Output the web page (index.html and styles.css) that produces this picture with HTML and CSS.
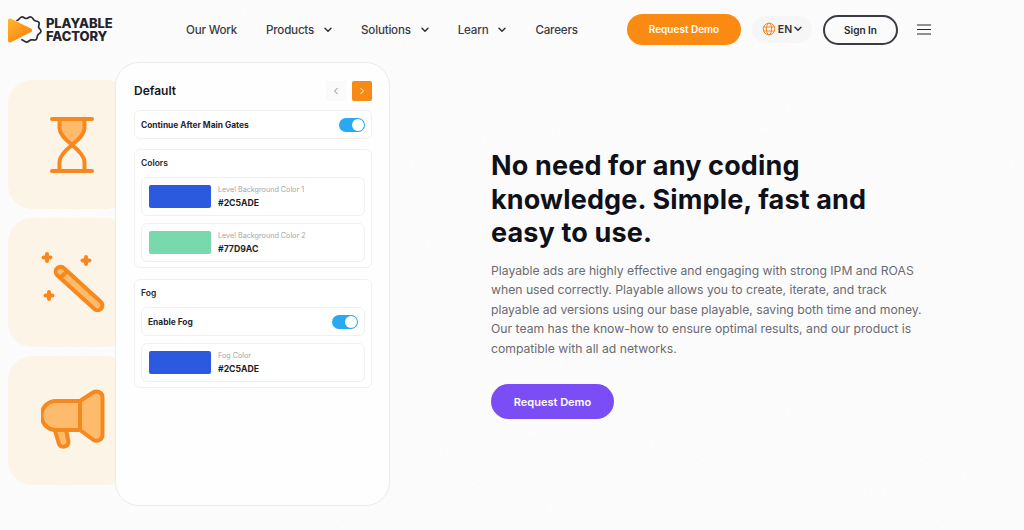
FILE: index.html
```html
<!DOCTYPE html>
<html lang="en">
<head>
<meta charset="utf-8">
<title>Playable Factory</title>
<link rel="stylesheet" href="styles.css">
</head>
<body>
<header class="header">
  <a class="logo">
    <svg class="logo-mark" width="36" height="30" viewBox="0 0 36 30">
      <defs><linearGradient id="lg" x1="0" y1="0" x2="1" y2="1"><stop offset="0" stop-color="#ffb62a"/><stop offset="1" stop-color="#fb7a0c"/></linearGradient></defs>
      <path d="M9 5.500c2-.3 2.500-3 4.500-3.500s3 1.500 4.700 1.500S21 1.500 23 2s2 2.800 3.500 3.500 3.500.3 4.500 2-.8 3-.4 4.700 2.700 2.300 2.400 4.200-2.600 2.300-3.400 3.900-.1 3.400-1.700 4.400-3.200-.3-5 .2-2.500 2.300-4.500 2.200-2.500-1.800-4.500-2.400" fill="none" stroke="#2b2b33" stroke-width="1.700" stroke-linecap="round"/>
      <path d="M0 5.500C0 3.700 1.600 3 3 3.700L23 13.500c1.700.8 1.700 2.700 0 3.500L3 27.300C1.600 28 0 27.300 0 25.500z" fill="url(#lg)"/>
    </svg>
    <span class="logo-text">PLAYABLE<br>FACTORY</span>
  </a>
  <nav class="nav">
    <a class="nav-link">Our Work</a>
    <a class="nav-link">Products<svg class="chev" width="8" height="6" viewBox="0 0 8 6"><path d="M1 1.200l3 3 3-3" fill="none" stroke="#30303a" stroke-width="1.500" stroke-linecap="round" stroke-linejoin="round"/></svg></a>
    <a class="nav-link">Solutions<svg class="chev" width="8" height="6" viewBox="0 0 8 6"><path d="M1 1.200l3 3 3-3" fill="none" stroke="#30303a" stroke-width="1.500" stroke-linecap="round" stroke-linejoin="round"/></svg></a>
    <a class="nav-link">Learn<svg class="chev" width="8" height="6" viewBox="0 0 8 6"><path d="M1 1.200l3 3 3-3" fill="none" stroke="#30303a" stroke-width="1.500" stroke-linecap="round" stroke-linejoin="round"/></svg></a>
    <a class="nav-link">Careers</a>
  </nav>
  <a class="btn-orange">Request Demo</a>
  <a class="lang">
    <svg width="14" height="14" viewBox="0 0 14 14" fill="none" stroke="#f5861f" stroke-width="1"><circle cx="7" cy="7" r="5.800"/><ellipse cx="7" cy="7" rx="2.600" ry="5.800"/><path d="M1.500 5h11M1.500 9h11"/></svg>
    <span>EN</span>
    <svg width="8" height="6" viewBox="0 0 8 6"><path d="M1 1.200l3 3 3-3" fill="none" stroke="#30303a" stroke-width="1.500" stroke-linecap="round" stroke-linejoin="round"/></svg>
  </a>
  <a class="btn-outline">Sign In</a>
  <svg class="burger" width="14" height="11" viewBox="0 0 14 11"><path d="M0 1h14M0 5.500h14M0 10h14" stroke="#26262e" stroke-width="1.200"/></svg>
</header>

<main class="hero">
  <section class="showcase">
    <div class="tiles">
      <div class="tile tile-hourglass">
        <svg width="44" height="58" viewBox="0 0 44 58" fill="none" stroke="#f5891f" stroke-width="4" stroke-linecap="round" stroke-linejoin="round">
          <path d="M10 3h24v10c0 5-5 10-12 16-7-6-12-11-12-16z" fill="#fdbb6b" stroke="none"/>
          <path d="M2 3h40M2 55h40M9.500 3v9c0 6 5 11 12.500 17 7.500 6 12.500 11 12.500 17v9M34.500 3v9c0 6-5 11-12.500 17-7.500 6-12.500 11-12.500 17v9"/>
        </svg>
      </div>
      <div class="tile">
        <svg width="66" height="66" viewBox="0 0 66 66" fill="none">
          <path d="M16 25a4.800 4.800 0 0 1 7-6.700L60 52a4.800 4.800 0 0 1-6.800 6.800z" fill="#fdbb6b" stroke="#f5891f" stroke-width="4" stroke-linejoin="round"/>
          <path d="M18 29l9-8.500" stroke="#f5891f" stroke-width="4"/>
          <path d="M6 4v7M2.500 7.500h7M45 7v7M41.500 10.500h7M8 42v7M4.500 45.500h7" stroke="#f5891f" stroke-width="4" stroke-linecap="round"/>
        </svg>
      </div>
      <div class="tile">
        <svg width="64" height="64" viewBox="0 0 64 64" fill="none" stroke="#f5891f" stroke-width="4" stroke-linejoin="round">
          <path d="M13.500 40l4.500 15c1.200 4 10 3.500 9.500-2L25 40" fill="#fdbb6b"/>
          <path d="M39 12H15a14.500 14.500 0 0 0 0 29h24z" fill="#fdbb6b"/>
          <path d="M39 12l13-8.500c4-2.500 9.500 0 9.500 4.500v38c0 4.500-5 7-9 5L39 41z" fill="#fdbb6b"/>
        </svg>
      </div>
    </div>
    <div class="panel">
      <div class="panel-head">
        <h2>Default</h2>
        <span class="pager">
          <span class="page-btn"><svg width="6" height="8" viewBox="0 0 6 8"><path d="M4.500 1L1.500 4l3 3" fill="none" stroke="#8d8d93" stroke-width="1"/></svg></span>
          <span class="page-btn page-on"><svg width="6" height="8" viewBox="0 0 6 8"><path d="M1.500 1l3 3-3 3" fill="none" stroke="#fff" stroke-width="1"/></svg></span>
        </span>
      </div>
      <div class="row row-top"><span class="row-label">Continue After Main Gates</span><span class="toggle"></span></div>
      <div class="group group-colors">
        <h3>Colors</h3>
        <div class="swatch-row">
          <span class="swatch swatch-blue"></span>
          <span class="swatch-text"><small>Level Background Color 1</small><b>#2C5ADE</b></span>
        </div>
        <div class="swatch-row">
          <span class="swatch swatch-green"></span>
          <span class="swatch-text"><small>Level Background Color 2</small><b>#77D9AC</b></span>
        </div>
      </div>
      <div class="group">
        <h3>Fog</h3>
        <div class="row"><span class="row-label">Enable Fog</span><span class="toggle"></span></div>
        <div class="swatch-row">
          <span class="swatch swatch-blue"></span>
          <span class="swatch-text"><small>Fog Color</small><b>#2C5ADE</b></span>
        </div>
      </div>
    </div>
  </section>
  <section class="copy">
    <h1>No need for any coding knowledge. Simple, fast and easy to use.</h1>
    <p>Playable ads are highly effective and engaging with strong IPM and ROAS when used correctly. Playable allows you to create, iterate, and track playable ad versions using our base playable, saving both time and money. Our team has the know-how to ensure optimal results, and our product is compatible with all ad networks.</p>
    <a class="btn-purple">Request Demo</a>
  </section>
</main>
</body>
</html>
```
FILE: styles.css
```css
* { box-sizing: border-box; }
html, body { height: 100%; }
body {
  margin: 0;
  width: 1024px;
  height: 530px;
  overflow: hidden;
  background-color: #fefefe;
  background-image: url("data:image/svg+xml,%3Csvg xmlns='http://www.w3.org/2000/svg' width='300' height='300'%3E%3Cfilter id='n'%3E%3CfeTurbulence type='fractalNoise' baseFrequency='.7' numOctaves='2' stitchTiles='stitch'/%3E%3CfeColorMatrix values='0 0 0 0 .5 0 0 0 0 .5 0 0 0 0 .5 0 0 0 .08 0'/%3E%3C/filter%3E%3Crect width='300' height='300' filter='url(%23n)'/%3E%3C/svg%3E");
  color: #0f111a;
  font-family: "Inter", "Noto Sans", sans-serif;
}
.header {
  display: flex;
  align-items: center;
  height: 58px;
  padding-left: 8px;
}
.logo { display: flex; align-items: center; gap: 2px; width: 178px; padding-top: 2px; }
.logo-mark { flex: none; }
.logo-text {
  font-weight: 800;
  font-size: 13px;
  line-height: 13px;
  color: #24242c;
  letter-spacing: -.1px;
}
.nav { display: flex; align-items: center; gap: 29px; width: 441px; padding-top: 2px; }
.nav-link {
  display: flex;
  align-items: center;
  gap: 10px;
  font-size: 11.600px;
  font-weight: 500;
  color: #3a3a44;
  letter-spacing: -.2px;
}
.chev { flex: none; }
.btn-orange {
  display: flex;
  align-items: center;
  justify-content: center;
  width: 114px;
  height: 31px;
  border-radius: 16px;
  background: #fb8a12;
  color: #fff;
  font-size: 10px;
  font-weight: 600;
}
.lang {
  display: flex;
  align-items: center;
  gap: 2px;
  height: 27px;
  width: 60px;
  margin-left: 11px;
  justify-content: center;
  border-radius: 14px;
  background: #f6f6f6;
  font-size: 10.500px;
  font-weight: 600;
  color: #33333c;
}
.btn-outline {
  display: flex;
  align-items: center;
  justify-content: center;
  width: 75px;
  height: 30px;
  margin-left: 11px;
  margin-top: 1px;
  border: 2px solid #3b3b44;
  border-radius: 15px;
  font-size: 10px;
  font-weight: 600;
  color: #26262e;
}
.burger { margin-left: 19px; }

.hero { display: flex; }
.showcase {
  position: relative;
  width: 491px;
  flex: none;
  padding: 22px 0 0 8px;
}
.tiles { display: flex; flex-direction: column; gap: 9px; width: 122px; }
.tile {
  display: flex;
  align-items: center;
  height: 129px;
  padding-left: 33px;
  border-radius: 24px;
  background: #fdf4e8;
}
.tile-hourglass { padding-left: 42px; }
.panel {
  position: absolute;
  left: 115px;
  top: 4px;
  width: 275px;
  height: 444px;
  padding: 18px 17px 0 18px;
  background: #fefefe;
  border: 1px solid #ececea;
  border-radius: 24px;
}
.panel-head {
  display: flex;
  align-items: center;
  justify-content: space-between;
  height: 20px;
  margin-bottom: 9px;
}
.panel-head h2 { margin: 0 0 2px; font-size: 12px; font-weight: 600; color: #17171f; }
.pager { display: flex; gap: 6px; }
.page-btn {
  display: flex;
  align-items: center;
  justify-content: center;
  width: 20px;
  height: 20px;
  border-radius: 2px;
  background: #fafafa;
}
.page-on { background: #f78a14; }
.row {
  display: flex;
  align-items: center;
  justify-content: space-between;
  height: 29px;
  padding: 0 6px;
  background: #fff;
  border: 1px solid #f1f1f1;
  border-radius: 6px;
}
.row-top { margin-bottom: 10px; }
.row-label { font-size: 8.400px; font-weight: 700; color: #26262e; }
.toggle {
  position: relative;
  width: 26px;
  height: 14px;
  border-radius: 7px;
  background: #2aa9f3;
}
.toggle::after {
  content: "";
  position: absolute;
  right: 1px;
  top: 1px;
  width: 12px;
  height: 12px;
  border-radius: 50%;
  background: #fff;
}
.group {
  display: flex;
  flex-direction: column;
  gap: 7px;
  padding: 6px 6px 5px;
  background: #fff;
  border: 1px solid #f1f1f1;
  border-radius: 6px;
}
.group-colors { margin-bottom: 11px; }
.group h3 { margin: 0; height: 14px; line-height: 14px; font-size: 8.500px; font-weight: 600; color: #26262e; }
.swatch-row {
  display: flex;
  align-items: center;
  gap: 7px;
  height: 39px;
  padding: 0 7px;
  background: #fff;
  border: 1px solid #f1f1f1;
  border-radius: 6px;
}
.swatch { flex: none; width: 62px; height: 23px; border-radius: 2px; }
.swatch-blue { background: #2c5ade; }
.swatch-green { background: #77d9ac; }
.swatch-text { display: flex; flex-direction: column; gap: 4px; }
.swatch-text small { font-size: 7.200px; line-height: 9px; color: #a5a5aa; }
.swatch-text b { font-size: 8.700px; line-height: 11px; font-weight: 700; color: #1d1d25; }

.copy { width: 434px; padding-top: 91px; }
.copy h1 {
  margin: 0;
  max-width: 400px;
  font-size: 27px;
  line-height: 33.500px;
  font-weight: 700;
  letter-spacing: .15px;
  color: #0f111a;
}
.copy p {
  margin: 11px 0 0;
  font-size: 12.200px;
  line-height: 19.500px;
  color: #6a6a72;
}
.btn-purple {
  display: flex;
  align-items: center;
  justify-content: center;
  width: 123px;
  height: 35px;
  margin-top: 26px;
  border-radius: 18px;
  background: #7a4df5;
  color: #fff;
  font-size: 11px;
  font-weight: 600;
}
```
